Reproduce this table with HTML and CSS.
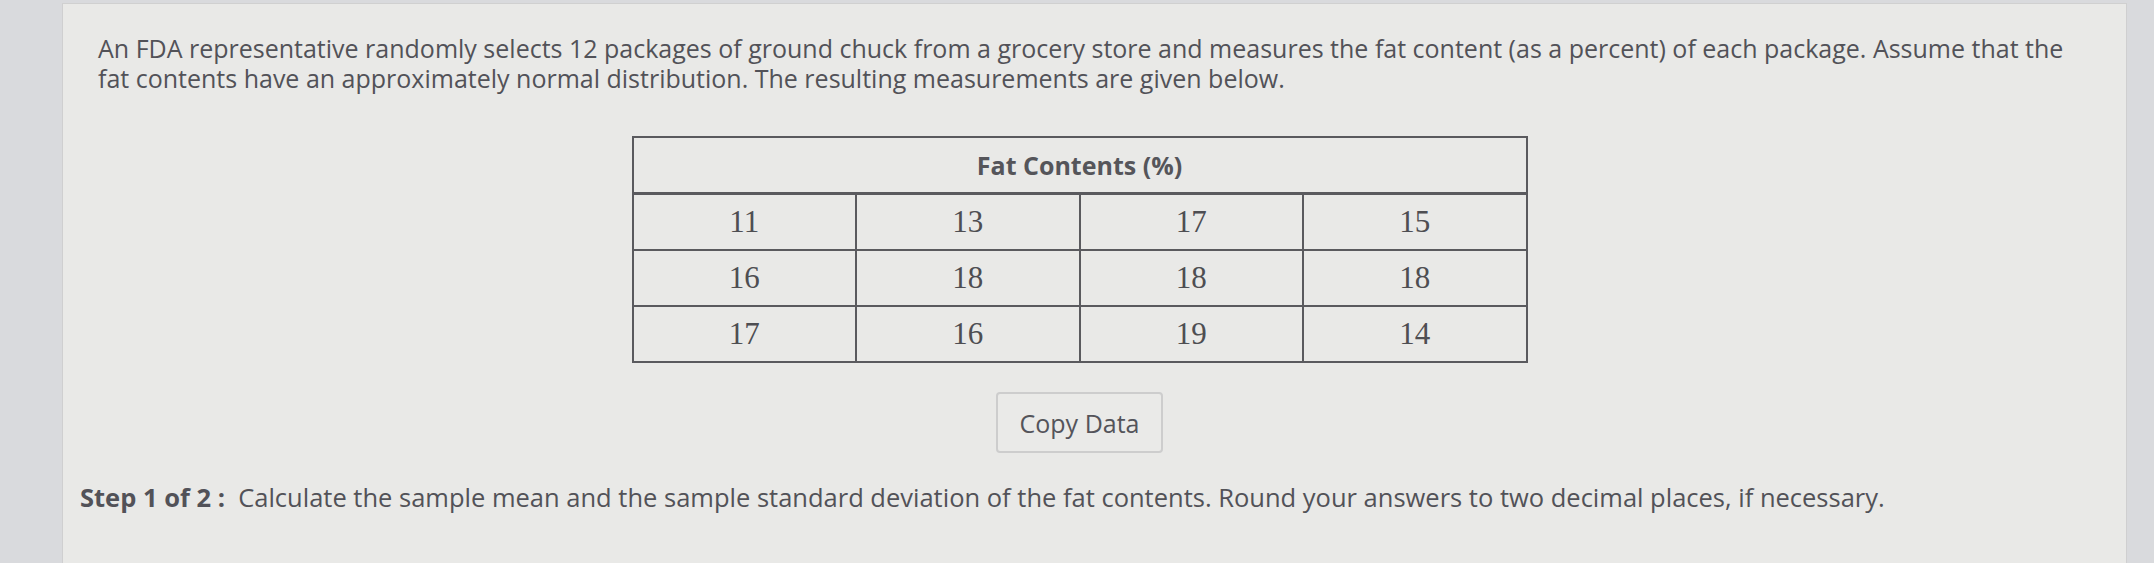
FILE: index.html
```html
<!DOCTYPE html>
<html>
<head>
<meta charset="utf-8">
<link rel="stylesheet" href="styles.css">
</head>
<body>
<div class="panel">
  <p class="intro">An FDA representative randomly selects 12 packages of ground chuck from a grocery store and measures the fat content (as a percent) of each package. Assume that the fat contents have an approximately normal distribution. The resulting measurements are given below.</p>
  <div class="center">
    <table class="data">
      <thead>
        <tr><th colspan="4">Fat Contents (%)</th></tr>
      </thead>
      <tbody>
        <tr><td>11</td><td>13</td><td>17</td><td>15</td></tr>
        <tr><td>16</td><td>18</td><td>18</td><td>18</td></tr>
        <tr><td>17</td><td>16</td><td>19</td><td>14</td></tr>
      </tbody>
    </table>
    <button class="copy">Copy Data</button>
  </div>
  <p class="step"><b>Step 1 of 2 :</b>&nbsp; Calculate the sample mean and the sample standard deviation of the fat contents. Round your answers to two decimal places, if necessary.</p>
</div>
</body>
</html>
```

FILE: styles.css
```css
html, body {
  margin: 0;
  padding: 0;
}
body {
  background: #d9dadd;
  height: 563px;
  overflow: hidden;
  font-family: "Open Sans", "Liberation Sans", sans-serif;
  color: #525258;
}
.panel {
  margin: 3px 0 0 62px;
  width: 2065px;
  height: 560px;
  box-sizing: border-box;
  background: #e9e9e7;
  border-top: 1px solid #d0d0d0;
  border-left: 1px solid #cfcfd0;
  border-right: 1px solid #cfcfd0;
  padding: 29px 65px 0 35px;
}
.intro {
  margin: 0;
  width: 2000px;
  font-size: 25px;
  line-height: 30px;
}
.center {
  display: flex;
  flex-direction: column;
  align-items: center;
}
.data {
  margin-top: 43px;
  border-collapse: collapse;
  width: 896px;
  table-layout: fixed;
  border: 2px solid #5a5a5e;
}
.data th {
  height: 54px;
  font-weight: 700;
  font-size: 25px;
  color: #55555a;
  border-bottom: 3px solid #5a5a5e;
  padding: 0;
}
.data td {
  height: 54px;
  border: 2px solid #5a5a5e;
  text-align: center;
  font-family: "Liberation Serif", "Times New Roman", serif;
  font-size: 31px;
  color: #4e4e52;
  padding: 0;
}
.copy {
  margin-top: 29px;
  width: 167px;
  height: 61px;
  background: #eaeae8;
  border: 2px solid #cdcdcd;
  border-radius: 4px;
  font-family: "Open Sans", "Liberation Sans", sans-serif;
  font-size: 25px;
  color: #54545a;
  padding: 0;
}
.step {
  margin: 29px 0 0 -18px;
  font-size: 25.5px;
  line-height: 30px;
}
.step b {
  font-weight: 700;
}
```
